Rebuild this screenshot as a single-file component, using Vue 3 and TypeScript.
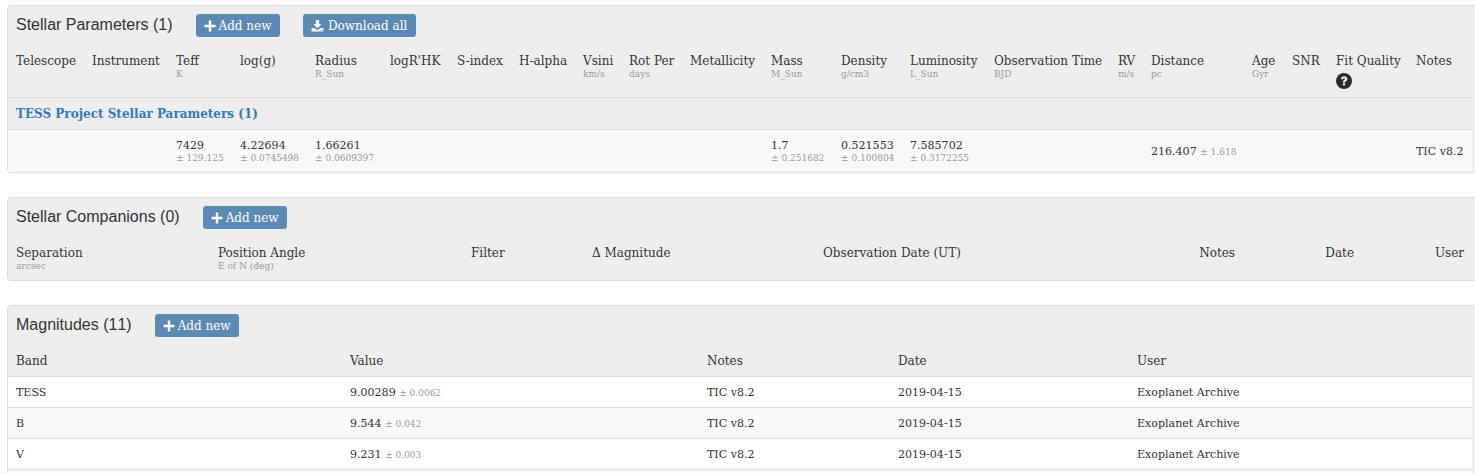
<script setup lang="ts">
interface Col { label: string; unit?: string; x: number; help?: boolean }
const toCols = (xs: [string, string | undefined, number][]): Col[] => xs.map(([label, unit, x]) => ({ label, unit, x }))

const stellarCols = toCols([
  ['Telescope', undefined, 76], ['Instrument', undefined, 84], ['Teff', 'K', 64], ['log(g)', undefined, 75],
  ['Radius', 'R_Sun', 75], ["logR'HK", undefined, 67], ['S-index', undefined, 62], ['H-alpha', undefined, 64],
  ['Vsini', 'km/s', 46], ['Rot Per', 'days', 61], ['Metallicity', undefined, 81], ['Mass', 'M_Sun', 70],
  ['Density', 'g/cm3', 69], ['Luminosity', 'L_Sun', 84], ['Observation Time', 'BJD', 124], ['RV', 'm/s', 33],
  ['Distance', 'pc', 101], ['Age', 'Gyr', 40], ['SNR', undefined, 44], ['Fit Quality', undefined, 80], ['Notes', undefined, 64],
])
const stellarRow: Record<string, { v: string; e?: string; inline?: boolean }> = {
  Teff: { v: '7429', e: '± 129.125' },
  'log(g)': { v: '4.22694', e: '± 0.0745498' },
  Radius: { v: '1.66261', e: '± 0.0609397' },
  Mass: { v: '1.7', e: '± 0.251682' },
  Density: { v: '0.521553', e: '± 0.100804' },
  Luminosity: { v: '7.585702', e: '± 0.3172255' },
  Distance: { v: '216.407', e: '± 1.618', inline: true },
  Notes: { v: 'TIC v8.2' },
}
const companionCols = toCols([
  ['Separation', 'arcsec', 202], ['Position Angle', 'E of N (deg)', 253], ['Filter', undefined, 121],
  ['Δ Magnitude', undefined, 231], ['Observation Date (UT)', undefined, 309], ['Notes', undefined, 119],
  ['Date', undefined, 119], ['User', undefined, 110],
])
const magRows = [
  { band: 'TESS', v: '9.00289', e: '± 0.0062' },
  { band: 'B', v: '9.544', e: '± 0.042' },
  { band: 'V', v: '9.231', e: '± 0.003' },
]
</script>

<template>
  <div class="page">
    <section class="panel">
      <header class="head">
        <h3>Stellar Parameters (1)</h3>
        <button class="btn"><svg class="ico" viewBox="0 0 12 12"><path d="M4.8 .5h2.4v4.3h4.3v2.4H7.2v4.3H4.8V7.2H.5V4.8h4.3z" /></svg>Add new</button>
        <button class="btn second-btn"><svg class="ico dl" viewBox="0 0 14 14"><path d="M5.2 1h3.6v4.6h2.5L7 10 2.7 5.6h2.5z" /><path fill-rule="evenodd" d="M.6 9.6h3.3L7 12.4l3.1-2.8h3.3v3.8H.6zM10 11.6v.8h1v-.8zM11.7 11.6v.8h1v-.8z" /></svg>Download all</button>
      </header>
      <table class="stellar">
        <colgroup><col v-for="c in stellarCols" :key="c.label" :style="{ width: c.x + 'px' }" /></colgroup>
        <thead>
          <tr>
            <th v-for="c in stellarCols" :key="c.label">
              {{ c.label }}<small v-if="c.unit">{{ c.unit }}</small>
              <svg v-if="c.label === 'Fit Quality'" class="help" viewBox="0 0 16 16"><circle cx="8" cy="8" r="8" fill="#2b2b2b" /><path d="M4.9 6.2C5 4.3 6.3 3.2 8.1 3.2c1.9 0 3.2 1.1 3.2 2.7 0 1.1-.6 1.8-1.4 2.3-.6.4-.8.6-.8 1.2H6.9c0-1.3.3-1.9 1.2-2.4.6-.4.9-.6.9-1 0-.5-.4-.7-.9-.7-.6 0-1 .3-1.1.9z" fill="#eee" /><rect x="6.9" y="10.2" width="2.2" height="2.3" fill="#eee" /></svg>
            </th>
          </tr>
        </thead>
        <tbody>
          <tr class="group"><td :colspan="stellarCols.length"><a>TESS Project Stellar Parameters (1)</a></td></tr>
          <tr class="data">
            <td v-for="c in stellarCols" :key="c.label">
              <template v-if="stellarRow[c.label]">
                {{ stellarRow[c.label].v }}
                <small v-if="stellarRow[c.label].e" :class="{ inl: stellarRow[c.label].inline }">{{ stellarRow[c.label].e }}</small>
              </template>
            </td>
          </tr>
        </tbody>
      </table>
    </section>

    <section class="panel">
      <header class="head">
        <h3>Stellar Companions (0)</h3>
        <button class="btn"><svg class="ico" viewBox="0 0 12 12"><path d="M4.8 .5h2.4v4.3h4.3v2.4H7.2v4.3H4.8V7.2H.5V4.8h4.3z" /></svg>Add new</button>
      </header>
      <table class="companions">
        <colgroup><col v-for="c in companionCols" :key="c.label" :style="{ width: c.x + 'px' }" /></colgroup>
        <thead>
          <tr>
            <th v-for="(c, i) in companionCols" :key="c.label" :class="{ right: i >= 5 }">{{ c.label }}<small v-if="c.unit">{{ c.unit }}</small></th>
          </tr>
        </thead>
      </table>
    </section>

    <section class="panel">
      <header class="head">
        <h3>Magnitudes (11)</h3>
        <button class="btn"><svg class="ico" viewBox="0 0 12 12"><path d="M4.8 .5h2.4v4.3h4.3v2.4H7.2v4.3H4.8V7.2H.5V4.8h4.3z" /></svg>Add new</button>
      </header>
      <table class="mags">
        <colgroup><col style="width:334px" /><col style="width:357px" /><col style="width:191px" /><col style="width:239px" /><col style="width:343px" /></colgroup>
        <thead><tr><th>Band</th><th>Value</th><th>Notes</th><th>Date</th><th>User</th></tr></thead>
        <tbody>
          <tr v-for="r in magRows" :key="r.band">
            <td>{{ r.band }}</td>
            <td>{{ r.v }} <small class="inl">{{ r.e }}</small></td>
            <td>TIC v8.2</td>
            <td>2019-04-15</td>
            <td>Exoplanet Archive</td>
          </tr>
          <tr><td colspan="5"></td></tr>
        </tbody>
      </table>
    </section>
  </div>
</template>

<style>
html, body { margin: 0; background: #fff; overflow: hidden; }
</style>

<style scoped>
.page {
  width: 1475px;
  height: 473px;
  overflow: hidden;
  padding: 5px 0 0 7px;
  box-sizing: border-box;
  font-family: "DejaVu Serif", serif;
  font-size: 11.05px;
  color: #333;
}
.panel {
  width: 1480px;
  box-sizing: border-box;
  background: #eee;
  border: 1px solid #ddd;
  border-radius: 4px;
  margin-bottom: 24px;
  overflow: hidden;
}
.head {
  display: flex;
  align-items: flex-start;
  height: 38px;
  padding: 8px 8px 0;
  box-sizing: border-box;
}
h3 {
  margin: 0;
  font-family: "Liberation Sans", Arial, sans-serif;
  font-size: 16px;
  font-weight: 400;
  line-height: 22px;
  margin-right: 23px;
  font-kerning: none;
}
.btn {
  display: inline-flex;
  align-items: center;
  height: 23px;
  padding: 0 8.5px 0 8px;
  border: 0;
  border-radius: 3px;
  background: #5b8ab5;
  color: #fff;
  font: 12px/1 "DejaVu Serif", serif;
}
.second-btn { margin-left: 23px; }
.ico { width: 12px; height: 12px; fill: #fff; margin: 1px 3px 0 0; flex: none; }
.ico.dl { width: 13px; height: 13px; margin: 0 4px 0 0; }
table { border-collapse: collapse; table-layout: fixed; width: 1464px; }
th {
  text-align: left;
  font-weight: 400;
  font-size: 12px;
  line-height: 16px;
  padding: 9px 8px 8px;
  vertical-align: top;
  white-space: nowrap;
}
th small, td small {
  display: block;
  font-size: 9px;
  line-height: 11px;
  color: #999;
}
small.inl { display: inline; font-size: 9px; }
.stellar th { height: 53px; padding-bottom: 0; box-sizing: border-box; }
.help { display: block; width: 16px; height: 16px; margin-top: 4px; }
.group td {
  height: 32px;
  padding: 2px 8px 0;
  box-sizing: border-box;
  border-top: 1px solid #ddd;
}
.group a { color: #337ab7; font-weight: 700; font-size: 12px; }
.data td {
  height: 43px;
  padding: 2px 8px 0;
  box-sizing: border-box;
  background: #f9f9f9;
  border-top: 1px solid #ddd;
  vertical-align: middle;
  line-height: 14px;
  white-space: nowrap;
}
.companions th.right { text-align: right; }
.mags th { padding: 9px 8px 7px; }
.mags td {
  height: 31px;
  padding: 0 8px;
  box-sizing: border-box;
  background: #fff;
  border-top: 1px solid #ddd;
  white-space: nowrap;
}
.mags tbody tr:nth-child(even) td { background: #f9f9f9; }
</style>
